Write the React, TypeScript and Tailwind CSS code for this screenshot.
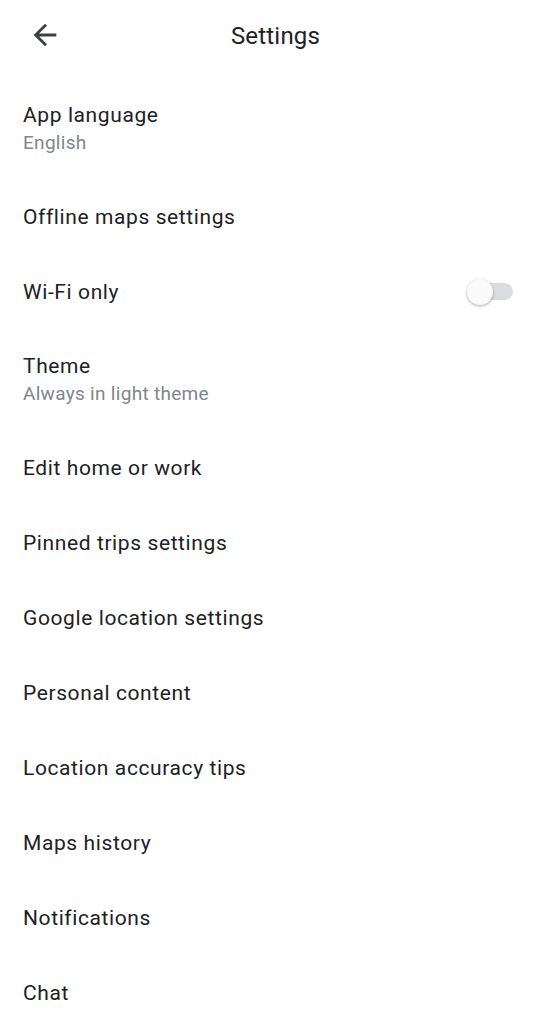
import React from "react";

type Item = { title: string; sub?: string; toggle?: boolean };

const items: Item[] = [
  { title: "App language", sub: "English" },
  { title: "Offline maps settings" },
  { title: "Wi-Fi only", toggle: true },
  { title: "Theme", sub: "Always in light theme" },
  { title: "Edit home or work" },
  { title: "Pinned trips settings" },
  { title: "Google location settings" },
  { title: "Personal content" },
  { title: "Location accuracy tips" },
  { title: "Maps history" },
  { title: "Notifications" },
  { title: "Chat" },
];

function Row({ item }: { item: Item }) {
  return (
    <div
      className={`flex items-center justify-between pl-[23px] pr-[38px] ${
        item.sub ? "h-[101px]" : "h-[75px]"
      }`}
    >
      <div className="flex flex-col">
        <div className="text-[21px] leading-[28px] tracking-[0.6px] text-[#202124]">{item.title}</div>
        {item.sub && (
          <div className="text-[19px] leading-[28px] tracking-[0.3px] text-[#80868b]">{item.sub}</div>
        )}
      </div>
      {item.toggle && (
        <div className="relative w-[46px] h-[26px] flex items-center">
          <div className="absolute right-0 w-[34px] h-[17px] rounded-full bg-[#dadce0]" />
          <div className="absolute left-0 w-[26px] h-[26px] rounded-full bg-[#fafafa] shadow-[0_1px_3px_rgba(0,0,0,0.35)]" />
        </div>
      )}
    </div>
  );
}

export default function App() {
  return (
    <div
      className="w-[551px] min-h-[1024px] bg-white overflow-hidden"
      style={{ fontFamily: "Roboto, 'Noto Sans', sans-serif" }}
    >
      <div className="relative h-[72px] flex items-center justify-center">
        <div className="absolute left-[28px] top-[18px] w-[34px] h-[34px]">
          <svg viewBox="0 0 24 24" width="34" height="34" fill="#3c4043">
            <path d="M20 11H7.83l5.59-5.59L12 4l-8 8 8 8 1.41-1.41L7.83 13H20v-2z" />
          </svg>
        </div>
        <div className="text-[24px] leading-[30px] text-[#202124] tracking-[0.2px]">Settings</div>
      </div>
      <div className="pt-[6px]">
        {items.map((it) => (
          <Row key={it.title} item={it} />
        ))}
      </div>
    </div>
  );
}
